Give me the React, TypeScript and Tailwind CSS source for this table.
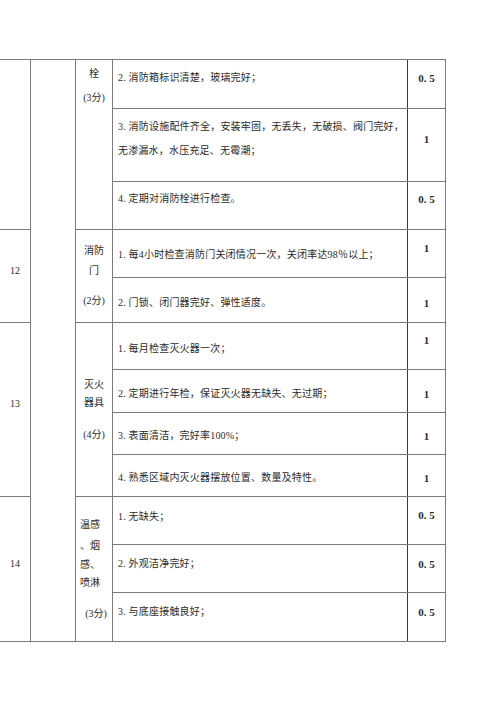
const font = {
  fontFamily: '"Liberation Serif", "Noto Sans CJK SC", serif',
};

type Item = {
  lines: string[];
  score: string;
  h: string;
  pt: string;
  spt: string;
};

// one entry per row of the two right columns
const items: Item[] = [
  { lines: ["2. 消防箱标识清楚，玻璃完好；"], score: "0. 5", h: "h-[49px]", pt: "pt-[11px]", spt: "pt-[11px]" },
  {
    lines: [
      "3. 消防设施配件齐全，安装牢固，无丢失，无破损、阀门完好，",
      "无渗漏水，水压充足、无霉潮；",
    ],
    score: "1",
    h: "h-[73px]",
    pt: "pt-[6px]",
    spt: "pt-[23px]",
  },
  { lines: ["4. 定期对消防栓进行检查。"], score: "0. 5", h: "h-[48px]", pt: "pt-[10px]", spt: "pt-[10px]" },
  { lines: ["1. 每4小时检查消防门关闭情况一次，关闭率达98％以上；"], score: "1", h: "h-[48px]", pt: "pt-[18px]", spt: "pt-[11px]" },
  { lines: ["2. 门锁、闭门器完好、弹性适度。"], score: "1", h: "h-[45px]", pt: "pt-[18px]", spt: "pt-[18px]" },
  { lines: ["1. 每月检查灭火器一次；"], score: "1", h: "h-[47px]", pt: "pt-[19px]", spt: "pt-[10px]" },
  { lines: ["2. 定期进行年检，保证灭火器无缺失、无过期；"], score: "1", h: "h-[43px]", pt: "pt-[17px]", spt: "pt-[17px]" },
  { lines: ["3. 表面清洁，完好率100%；"], score: "1", h: "h-[42px]", pt: "pt-[16px]", spt: "pt-[16px]" },
  { lines: ["4. 熟悉区域内灭火器摆放位置、数量及特性。"], score: "1", h: "h-[42px]", pt: "pt-[16px]", spt: "pt-[16px]" },
  { lines: ["1. 无缺失；"], score: "0. 5", h: "h-[48px]", pt: "pt-[13px]", spt: "pt-[11px]" },
  { lines: ["2. 外观洁净完好；"], score: "0. 5", h: "h-[48px]", pt: "pt-[12px]", spt: "pt-[12px]" },
  { lines: ["3. 与底座接触良好；"], score: "0. 5", h: "h-[49px]", pt: "pt-[12px]", spt: "pt-[12px]" },
];

const line = "border-[#7a7a7a]";

export default function App() {
  return (
    <div className="w-[500px] h-[706px] bg-white pt-[59px] text-[#2b2b2b]" style={font}>
      <div className={`flex w-[446px] border-t ${line}`}>
        {/* number column */}
        <div className={`flex w-[31px] flex-col border-r ${line} text-[10px]`}>
          <div className={`h-[170px] border-b ${line}`} />
          <div className={`flex h-[93px] items-center justify-center border-b pb-3 ${line}`}>12</div>
          <div className={`flex h-[174px] items-center justify-center border-b pb-3 ${line}`}>13</div>
          <div className={`flex h-[145px] items-center justify-center border-b pb-3 ${line}`}>14</div>
        </div>

        {/* merged empty column */}
        <div className={`w-[45px] border-r border-b ${line}`} />

        {/* category column */}
        <div className={`flex w-[37px] flex-col border-r ${line} text-[10px]`}>
          <div className={`flex h-[170px] flex-col items-center border-b pt-[7px] ${line}`}>
            <div className="leading-[14px]">栓</div>
            <div className="mt-[10px] leading-[14px]">(3分)</div>
          </div>
          <div className={`flex h-[93px] flex-col items-center justify-center border-b ${line}`}>
            <div className="leading-[14px]">消防</div>
            <div className="mt-[6px] leading-[14px]">门</div>
            <div className="mt-[16px] leading-[14px]">(2分)</div>
          </div>
          <div className={`flex h-[174px] flex-col items-center justify-center border-b ${line}`}>
            <div className="leading-[14px]">灭火</div>
            <div className="mt-[4px] leading-[14px]">器具</div>
            <div className="mt-[18px] leading-[14px]">(4分)</div>
          </div>
          <div className={`flex h-[145px] flex-col justify-center border-b pl-[4px] ${line}`}>
            <div className="leading-[14px]">温感</div>
            <div className="mt-[7px] leading-[14px]">、烟</div>
            <div className="mt-[5px] leading-[14px]">感、</div>
            <div className="mt-[4px] leading-[14px]">喷淋</div>
            <div className="mt-[17px] self-center leading-[14px]">(3分)</div>
          </div>
        </div>

        {/* content + score */}
        <div className="flex flex-1 flex-col">
          {items.map((it, i) => (
            <div key={i} className={`flex ${it.h} border-b ${line}`}>
              <div className={`w-[295px] border-r border-[#3a3a3a] pl-[5px] text-[10px] tracking-[0.2px] ${it.pt}`}>
                {it.lines.map((l, j) => (
                  <div key={j} className={it.lines.length > 1 ? "leading-[24px]" : "leading-[14px]"}>
                    {l}
                  </div>
                ))}
              </div>
              <div className={`flex-1 border-r ${line} text-center text-[11px] font-semibold leading-[14px] ${it.spt}`}>
                {it.score}
              </div>
            </div>
          ))}
        </div>
      </div>
    </div>
  );
}
